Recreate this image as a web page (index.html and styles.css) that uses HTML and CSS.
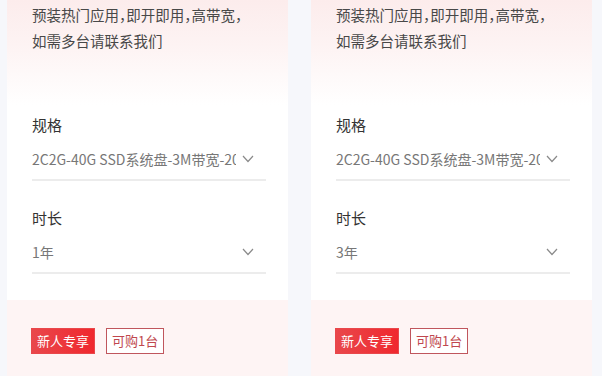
FILE: index.html
```html
<!DOCTYPE html>
<html lang="zh-CN">
<head>
    <meta charset="UTF-8">
    <meta name="viewport" content="width=device-width, initial-scale=1.0">
    <title>云服务器套餐</title>
    <link rel="stylesheet" href="styles.css">
</head>
<body>
    <div class="cards">
        <div class="card">
            <div class="card-body">
                <p class="desc">预装热门应用，即开即用，高带宽，<br>如需多台请联系我们</p>

                <div class="field">
                    <div class="label">规格</div>
                    <div class="select">
                        <span class="value">2C2G-40G SSD系统盘-3M带宽-20</span>
                        <svg class="arrow" width="12" height="8" viewBox="0 0 12 8"><polyline points="1,1 6,6.5 11,1" fill="none" stroke="#8a8a8a" stroke-width="1.2"/></svg>
                    </div>
                </div>

                <div class="field">
                    <div class="label">时长</div>
                    <div class="select">
                        <span class="value">1年</span>
                        <svg class="arrow" width="12" height="8" viewBox="0 0 12 8"><polyline points="1,1 6,6.5 11,1" fill="none" stroke="#8a8a8a" stroke-width="1.2"/></svg>
                    </div>
                </div>
            </div>
            <div class="card-foot">
                <span class="tag tag-red">新人专享</span>
                <span class="tag tag-line">可购1台</span>
            </div>
        </div>

        <div class="card">
            <div class="card-body">
                <p class="desc">预装热门应用，即开即用，高带宽，<br>如需多台请联系我们</p>

                <div class="field">
                    <div class="label">规格</div>
                    <div class="select">
                        <span class="value">2C2G-40G SSD系统盘-3M带宽-20</span>
                        <svg class="arrow" width="12" height="8" viewBox="0 0 12 8"><polyline points="1,1 6,6.5 11,1" fill="none" stroke="#8a8a8a" stroke-width="1.2"/></svg>
                    </div>
                </div>

                <div class="field">
                    <div class="label">时长</div>
                    <div class="select">
                        <span class="value">3年</span>
                        <svg class="arrow" width="12" height="8" viewBox="0 0 12 8"><polyline points="1,1 6,6.5 11,1" fill="none" stroke="#8a8a8a" stroke-width="1.2"/></svg>
                    </div>
                </div>
            </div>
            <div class="card-foot">
                <span class="tag tag-red">新人专享</span>
                <span class="tag tag-line">可购1台</span>
            </div>
        </div>
    </div>
</body>
</html>
```

FILE: styles.css
```css
body {
    margin: 0;
    background: #f6f7fb;
    font-family: "Noto Sans CJK SC", "Noto Sans", sans-serif;
    font-feature-settings: "halt";
    color: #333;
    overflow: hidden;
}
.cards {
    display: flex;
    gap: 23px;
    padding: 0 10px 0 7px;
}
.card {
    width: 281px;
    background: #fff;
}
.card-body {
    padding: 2px 22px 26px 25px;
    background: linear-gradient(180deg, #fcecec 0px, #fdf3f3 45px, #ffffff 105px);
}
.desc {
    margin: 0;
    font-size: 14.5px;
    line-height: 26px;
    color: #484848;
}
.desc br + * {
    display: none;
}
.field {
    margin-top: 26px;
}
.desc + .field {
    margin-top: 60px;
}
.label {
    font-size: 15px;
    line-height: 22px;
    color: #333;
}
.select {
    display: flex;
    align-items: center;
    margin-top: 12px;
    padding-bottom: 9px;
    border-bottom: 2px solid #ececec;
    line-height: 22px;
}
.value {
    flex: 1;
    min-width: 0;
    overflow: hidden;
    white-space: nowrap;
    font-size: 14px;
    color: #777;
}
.arrow {
    flex: none;
    margin: 0 12px 0 6px;
}
.card-foot {
    height: 80px;
    padding: 28px 24px 0;
    background: #fef4f4;
    display: flex;
    align-items: flex-start;
    gap: 11px;
}
.tag {
    display: inline-block;
    height: 26px;
    line-height: 24px;
    padding: 0 5px;
    font-size: 13px;
    box-sizing: border-box;
}
.tag-red {
    background: linear-gradient(90deg, #e9474b, #f0282e);
    color: #fff;
    border: 1px solid #e9474b;
}
.tag-line {
    border: 1px solid #c0565d;
    color: #c0474e;
    background: #fff;
}
```
